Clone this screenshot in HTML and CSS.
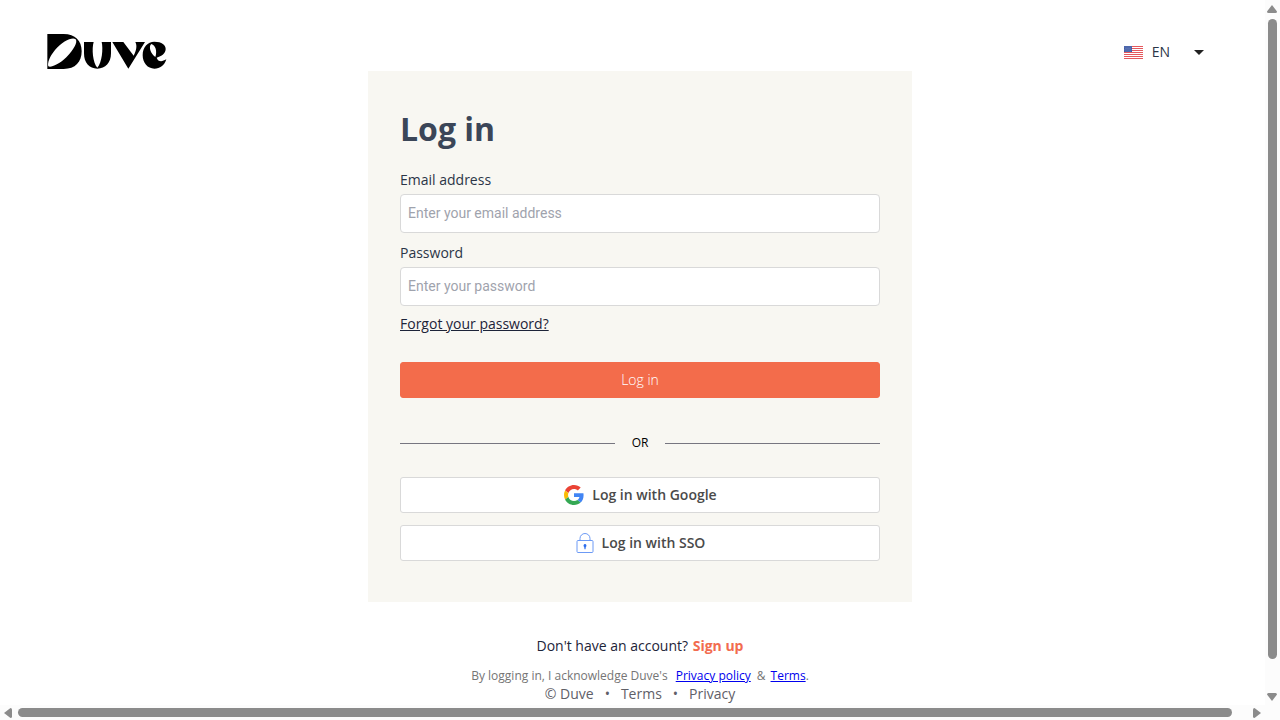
FILE: index.html
```html
<!DOCTYPE html>
<html lang="en">
<head>
<meta charset="utf-8">
<meta name="viewport" content="width=device-width, initial-scale=1">
<title>Duve - Log in</title>
<link rel="stylesheet" href="styles.css">
</head>
<body>
<header class="topbar">
  <svg class="logo" viewBox="0 0 360 105" role="img" aria-label="Duve">
    <path fill-rule="evenodd" d="M1 0H50C85 0 104 20 104 52S85 105 50 105H1ZM4 97C10 102 34 93 58 70C80 48 93 24 86 16C76 8 46 22 24 48C8 67 1 87 4 97Z"/>
    <path fill-rule="evenodd" d="M111 24H192V58C192 87 175 104 151 104S111 87 111 58ZM140 24C134 44 137 86 151 101C165 86 169 44 164 24Z"/>
    <path d="M196 24H229L260 65C268 49 271 35 265 24H294L244 104Z"/>
    <path fill-rule="evenodd" d="M322 23C345 23 356 33 356 45C356 58 344 67 329 71C333 84 345 84 358 76C352 95 339 104 322 104C302 104 287 87 287 64C287 39 302 23 322 23ZM313 30C304 37 310 58 325 69C331 53 326 33 313 30Z"/>
  </svg>
  <button class="language" type="button">
    <svg class="flag" viewBox="0 0 19 13" aria-hidden="true">
      <path fill="#fff" d="M0 0h19v13H0z"/>
      <path stroke="#e5585d" d="M0 .5h19M0 2.500h19M0 4.500h19M0 6.500h19M0 8.500h19M0 10.500h19M0 12.500h19"/>
      <path fill="#3f5ba5" d="M0 0h8v6H0z"/>
      <path stroke="#a9b7da" stroke-width=".7" stroke-dasharray=".8 1.2" d="M.6 1h7M1.6 2.4h6M.6 3.8h7M1.6 5.1h6"/>
    </svg>
    <span>EN</span>
    <svg class="caret" viewBox="0 0 10 5" aria-hidden="true"><path d="M0 0h10L5 5z"/></svg>
  </button>
</header>
<main>
  <form class="card">
    <h1>Log in</h1>
    <div class="field">
      <label for="email">Email address</label>
      <input id="email" type="email" placeholder="Enter your email address">
    </div>
    <div class="field">
      <label for="password">Password</label>
      <input id="password" type="password" placeholder="Enter your password">
    </div>
    <a class="forgot" href="#forgot">Forgot your password?</a>
    <button class="button primary" type="submit">Log in</button>
    <div class="divider"><span>OR</span></div>
    <div class="providers">
      <button class="button provider" type="button">
        <svg class="google" viewBox="0 0 48 48" aria-hidden="true">
          <path fill="#ea4335" d="M24 9.5c3.54 0 6.71 1.22 9.21 3.6l6.85-6.85C35.9 2.38 30.47 0 24 0 14.62 0 6.51 5.38 2.56 13.22l7.98 6.19C12.43 13.72 17.74 9.5 24 9.5z"/>
          <path fill="#4285f4" d="M46.98 24.55c0-1.57-.15-3.09-.38-4.55H24v9.02h12.94c-.58 2.96-2.26 5.48-4.78 7.18l7.73 6c4.51-4.18 7.09-10.36 7.09-17.65z"/>
          <path fill="#fbbc05" d="M10.53 28.59A14.5 14.5 0 0 1 9.77 24c0-1.6.27-3.14.76-4.59l-7.98-6.19A23.9 23.9 0 0 0 0 24c0 3.88.92 7.54 2.56 10.78z"/>
          <path fill="#34a853" d="M24 48c6.48 0 11.93-2.13 15.89-5.81l-7.73-6c-2.15 1.45-4.92 2.3-8.16 2.3-6.26 0-11.57-4.22-13.47-9.91l-7.98 6.19C6.51 42.62 14.62 48 24 48z"/>
        </svg>
        Log in with Google
      </button>
      <button class="button provider" type="button">
        <svg class="lock" viewBox="0 0 17 20" aria-hidden="true">
          <path fill="none" stroke="#6c9af5" d="M1.500 7.500h14a1 1 0 0 1 1 1v10a1 1 0 0 1-1 1h-14a1 1 0 0 1-1-1v-10a1 1 0 0 1 1-1zM3.500 7.500v-2a5 5 0 0 1 10 0v2"/>
          <path fill="#2f6fed" d="M8.500 11a1.600 1.600 0 0 1 .8 2.900l-.3 2.300H8l-.3-2.300A1.600 1.600 0 0 1 8.500 11z"/>
        </svg>
        Log in with SSO
      </button>
    </div>
  </form>
  <p class="signup">Don't have an account? <a href="#signup">Sign up</a></p>
</main>
<footer class="footer">
  <p class="legal"><span>By logging in, I acknowledge Duve's</span><a href="#privacy-policy">Privacy policy</a><span class="and">&amp;</span><span><a href="#terms-of-use">Terms</a>.</span></p>
  <nav class="links"><span>© Duve</span><span>•</span><a href="#terms">Terms</a><span>•</span><a href="#privacy">Privacy</a></nav>
</footer>
<div class="scrollbar vertical" aria-hidden="true">
  <svg viewBox="0 0 10 8"><path d="M5 0l5 6.500q0 1.500-1.500 1.500h-7Q0 8 0 6.500z"/></svg>
  <span class="thumb"></span>
  <svg viewBox="0 0 10 8"><path d="M5 8l5-6.500Q10 0 8.500 0h-7Q0 0 0 1.500z"/></svg>
</div>
<div class="scrollbar horizontal" aria-hidden="true">
  <svg viewBox="0 0 8 10"><path d="M0 5L6.500 0Q8 0 8 1.500v7q0 1.500-1.500 1.500z"/></svg>
  <span class="thumb"></span>
  <svg viewBox="0 0 8 10"><path d="M8 5L1.500 0Q0 0 0 1.500v7Q0 10 1.500 10z"/></svg>
</div>
</body>
</html>
```
FILE: styles.css
```css
* { box-sizing: border-box; }
html { overflow: hidden; }
body {
  margin: 0;
  background: #fff;
  color: #1d2439;
  font: 14px/20px "Open Sans", sans-serif;
}
h1, p { margin: 0; }
button, input { font: inherit; }
.topbar {
  display: flex;
  justify-content: space-between;
  align-items: flex-start;
  height: 71px;
  padding: 34px 76px 0 47px;
}
.logo { width: 120px; height: 35px; }
.language {
  display: flex;
  align-items: center;
  padding: 8px 0;
  border: 0;
  background: none;
  color: #2b3547;
}
.flag { width: 19px; height: 13px; margin-right: 9px; }
.caret { width: 10px; height: 5px; margin-left: 24px; fill: #222; }
.card {
  display: flex;
  flex-direction: column;
  width: 100%;
  max-width: 544px;
  margin: 0 auto;
  padding: 36px 32px 41px;
  background: #f8f7f2;
}
h1 {
  margin-bottom: 20px;
  color: #3b4658;
  font-size: 32px;
  line-height: 43px;
  font-weight: 700;
}
.field { display: flex; flex-direction: column; gap: 4px; margin-bottom: 10px; }
.field label { color: #2b3547; }
.field input {
  width: 100%;
  height: 39px;
  padding: 0 7px 2px;
  border: 1px solid #d9d9d9;
  border-radius: 4px;
  background: #fff;
  font: 14px/20px Roboto, sans-serif;
}
.field input::placeholder { color: #9fa3ad; opacity: 1; }
.forgot {
  align-self: flex-start;
  margin: -2px 0 28px;
  color: #1d2439;
}
.button {
  display: flex;
  align-items: center;
  justify-content: center;
  gap: 8px;
  width: 100%;
  height: 36px;
  padding: 0;
  border: 1px solid #d9d9d9;
  border-radius: 3px;
}
.primary { border-color: #f26c4c; background: #f36c4b; color: #fff; font-weight: 300; }
.divider {
  display: flex;
  align-items: center;
  gap: 17px;
  margin: 35px 0 24px;
  color: #000;
  font-size: 12px;
}
.divider::before, .divider::after { content: ""; flex: 1; height: 1px; background: #777680; }
.providers { display: grid; gap: 12px; }
.provider { padding-left: 1px; background: #fff; color: #4a4a4a; font-weight: 600; }
.google { width: 20px; height: 20px; }
.lock { width: 18px; height: 20px; }
.signup { margin-top: 34px; text-align: center; }
.signup a { margin-left: 1px; color: #f26c4f; font-weight: 700; text-decoration: none; }
.footer { margin-top: 11px; color: #5f6068; }
.legal {
  display: flex;
  justify-content: center;
  color: #757575;
  font-size: 12px;
  line-height: 18px;
}
.legal a { color: #00e; }
.legal > a { margin-left: 8px; }
.and { margin: 0 5px 0 6px; }
.links { display: flex; justify-content: center; gap: 11px; line-height: 18px; }
.links a { color: inherit; text-decoration: none; }
.scrollbar {
  position: fixed;
  right: 0;
  bottom: 0;
  display: flex;
  align-items: center;
  gap: 6px;
  background: #fcfcfc;
}
.scrollbar svg { flex: none; fill: #8b8b8b; }
.thumb { border-radius: 5px; background: #8b8b8b; }
.vertical { top: 0; flex-direction: column; width: 15px; padding: 5px 1px 19px 0; }
.vertical svg { width: 10px; height: 8px; }
.vertical .thumb { width: 9px; flex: 1; margin-bottom: 28px; }
.horizontal { left: 0; height: 15px; padding: 0 19px 0 4px; }
.horizontal svg { width: 8px; height: 10px; }
.horizontal .thumb { height: 9px; flex: 1; margin-right: 15px; }
```
